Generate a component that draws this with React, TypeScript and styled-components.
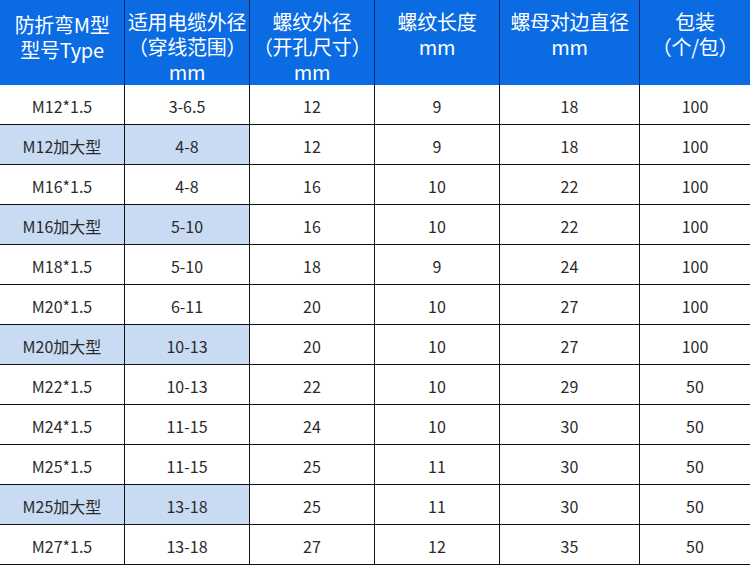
import React from "react";
import styled, { createGlobalStyle } from "styled-components";

const Global = createGlobalStyle`
  html, body { margin: 0; padding: 0; background: #ffffff; }
  body { font-family: "Noto Sans CJK SC", "Noto Sans", sans-serif; }
`;

const Table = styled.div`
  display: grid;
  grid-template-columns: 125px 125px 125px 125px 140px 110px;
  width: 750px;
`;

const HeadCell = styled.div<{ $last?: boolean; $top?: number }>`
  height: 85px;
  box-sizing: border-box;
  background: #0a6be3;
  color: #ffffff;
  font-size: 20px;
  line-height: 25px;
  text-align: center;
  padding-top: ${(p) => p.$top ?? 9}px;
  border-right: ${(p) => (p.$last ? "none" : "1px solid #0c2a66")};
  white-space: nowrap;
  letter-spacing: -0.3px;
`;

const Cell = styled.div<{ $last?: boolean; $hl?: boolean }>`
  height: 40px;
  box-sizing: border-box;
  display: flex;
  align-items: center;
  justify-content: center;
  background: ${(p) => (p.$hl ? "#c8dbf3" : "#ffffff")};
  color: #2a2a2a;
  font-size: 16px;
  border-right: ${(p) => (p.$last ? "none" : "1px solid #111")};
  border-bottom: 1px solid #111;
  padding-top: 2px;
`;

const heads: { lines: string[]; top?: number }[] = [
  { lines: ["防折弯M型", "型号Type"], top: 12 },
  { lines: ["适用电缆外径", "（穿线范围）", "mm"] },
  { lines: ["螺纹外径", "（开孔尺寸）", "mm"] },
  { lines: ["螺纹长度", "mm"] },
  { lines: ["螺母对边直径", "mm"] },
  { lines: ["包装", "（个/包）"] },
];

const rows: [string, string, string, string, string, string, boolean][] = [
  ["M12*1.5", "3-6.5", "12", "9", "18", "100", false],
  ["M12加大型", "4-8", "12", "9", "18", "100", true],
  ["M16*1.5", "4-8", "16", "10", "22", "100", false],
  ["M16加大型", "5-10", "16", "10", "22", "100", true],
  ["M18*1.5", "5-10", "18", "9", "24", "100", false],
  ["M20*1.5", "6-11", "20", "10", "27", "100", false],
  ["M20加大型", "10-13", "20", "10", "27", "100", true],
  ["M22*1.5", "10-13", "22", "10", "29", "50", false],
  ["M24*1.5", "11-15", "24", "10", "30", "50", false],
  ["M25*1.5", "11-15", "25", "11", "30", "50", false],
  ["M25加大型", "13-18", "25", "11", "30", "50", true],
  ["M27*1.5", "13-18", "27", "12", "35", "50", false],
];

export default function App() {
  return (
    <>
      <Global />
      <Table>
        {heads.map((h, i) => (
          <HeadCell key={i} $last={i === heads.length - 1} $top={h.top}>
            {h.lines.map((l, j) => (
              <div key={j}>{l}</div>
            ))}
          </HeadCell>
        ))}
        {rows.map((r, ri) =>
          r.slice(0, 6).map((v, ci) => (
            <Cell key={`${ri}-${ci}`} $last={ci === 5} $hl={r[6] === true && ci < 2}>
              {v as string}
            </Cell>
          ))
        )}
      </Table>
    </>
  );
}
